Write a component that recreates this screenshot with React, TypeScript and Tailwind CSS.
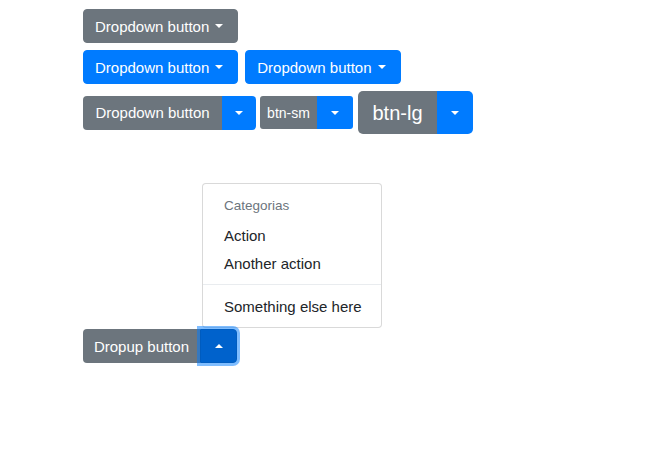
import React from "react";

const Caret = ({ up = false }: { up?: boolean }) => (
  <span
    className={
      up
        ? "inline-block w-0 h-0 border-x-[4px] border-x-transparent border-b-[4px] border-b-white"
        : "inline-block w-0 h-0 border-x-[4px] border-x-transparent border-t-[4px] border-t-white"
    }
  />
);

const DropdownButton = ({ color }: { color: "gray" | "blue" }) => (
  <button
    className={`flex items-center h-[34px] pl-[11px] pr-[14px] rounded-[4px] text-white text-[15px] leading-[21px] border ${
      color === "gray"
        ? "bg-[#6c757d] border-[#6c757d]"
        : "bg-[#007bff] border-[#007bff]"
    }`}
  >
    <span>Dropdown button</span>
    <span className="ml-[6px] flex items-center">
      <Caret />
    </span>
  </button>
);

const App = () => {
  return (
    <div className="min-h-[462px] bg-white pl-[83px] pt-[9px] font-['Liberation_Sans',Arial,sans-serif] text-[#212529]">
      <div className="flex">
        <DropdownButton color="gray" />
      </div>

      <div className="flex gap-[7px] mt-[7px]">
        <DropdownButton color="blue" />
        <DropdownButton color="blue" />
      </div>

      <div className="flex items-center mt-[7px] h-[43px]">
        {/* split default */}
        <div className="flex">
          <button className="h-[34px] w-[139px] rounded-l-[4px] bg-[#6c757d] text-white text-[15px] leading-[21px] flex items-center justify-center">
            Dropdown button
          </button>
          <button className="h-[34px] w-[34px] rounded-r-[4px] bg-[#007bff] flex items-center justify-center">
            <Caret />
          </button>
        </div>

        {/* split sm */}
        <div className="flex ml-[4px]">
          <button className="h-[33px] w-[57px] rounded-l-[3px] bg-[#6c757d] text-white text-[14px] leading-[18px] flex items-center justify-center">
            btn-sm
          </button>
          <button className="h-[33px] w-[36px] rounded-r-[3px] bg-[#007bff] flex items-center justify-center">
            <Caret />
          </button>
        </div>

        {/* split lg */}
        <div className="flex ml-[5px]">
          <button className="h-[43px] w-[79px] rounded-l-[5px] bg-[#6c757d] text-white text-[20px] leading-[26px] flex items-center justify-center">
            btn-lg
          </button>
          <button className="h-[43px] w-[36px] rounded-r-[5px] bg-[#007bff] flex items-center justify-center">
            <Caret />
          </button>
        </div>
      </div>

      {/* dropup */}
      <div className="relative inline-flex mt-[195px]">
        <button className="h-[34px] w-[117px] rounded-l-[4px] bg-[#6c757d] text-white text-[15px] leading-[21px] flex items-center justify-center">
          Dropup button
        </button>
        <button className="relative z-10 h-[34px] w-[37px] rounded-r-[4px] bg-[#0062cc] border border-[#005cbf] shadow-[0_0_0_3px_rgba(0,123,255,0.5)] flex items-center justify-center">
          <Caret up />
        </button>

        <div className="absolute left-[119px] bottom-[calc(100%+1px)] w-[180px] bg-white border border-black/15 rounded-[4px] py-[7px] text-[15px] whitespace-nowrap">
          <h6 className="px-[21px] py-[6px] text-[13.5px] leading-[18px] text-[#6c757d]">
            Categorias
          </h6>
          <a className="block px-[21px] py-[3.5px] leading-[21px] text-[#212529]">
            Action
          </a>
          <a className="block px-[21px] py-[3.5px] leading-[21px] text-[#212529]">
            Another action
          </a>
          <div className="my-[7px] border-t border-[#e9ecef]" />
          <a className="block px-[21px] py-[3.5px] leading-[21px] text-[#212529]">
            Something else here
          </a>
        </div>
      </div>
    </div>
  );
};

export default App;
